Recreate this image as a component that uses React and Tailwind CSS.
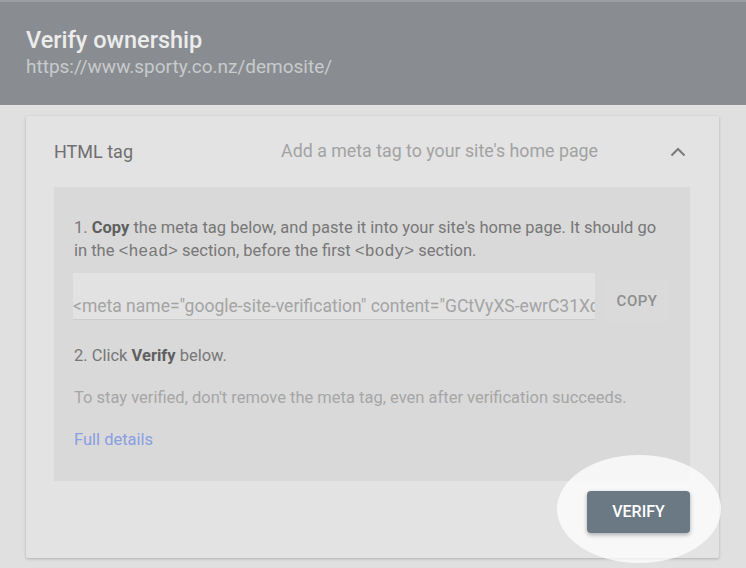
import React from "react";

const font = { fontFamily: "Roboto, 'Noto Sans', Arial, sans-serif" };
const mono = { fontFamily: "'Liberation Mono', 'DejaVu Sans Mono', monospace" };

export default function App() {
  return (
    <div className="min-h-[568px] w-full bg-[#e0e0e0] overflow-hidden" style={font}>
      {/* Dialog header */}
      <div className="h-[105px] bg-[#898d91] border-t-2 border-[#9a9da1] px-[26px] pt-[23px]">
        <h1 className="text-[23.5px] leading-[30px] font-medium text-[#ececec]">Verify ownership</h1>
        <p className="text-[19px] leading-[24px] text-[#c8cacc]">https://www.sporty.co.nz/demosite/</p>
      </div>

      {/* Method card */}
      <div className="ml-[26px] mt-[11px] w-[693px] h-[442px] bg-[#e3e3e3] rounded-[2px] shadow-[0_1px_3px_rgba(0,0,0,0.22)] pl-[28px] pr-[29px]">
        <div className="h-[71px] flex items-center">
          <span className="flex-1 text-[18px] text-[#6f6f6f]">HTML tag</span>
          <span className="text-[17.8px] text-[#a2a2a2]">Add a meta tag to your site's home page</span>
          <span className="ml-[68px] w-[24px] h-[24px] flex items-center justify-center">
            <svg width="16" height="10" viewBox="0 0 16 10" fill="none">
              <polyline points="1.5,8.5 8,2 14.5,8.5" stroke="#7a7a7a" strokeWidth="2" />
            </svg>
          </span>
        </div>

        {/* Instructions panel */}
        <div className="h-[294px] bg-[#d9d9d9] pl-[20px] pr-[20px] pt-[29px]">
          <p className="text-[16.5px] leading-[23px] text-[#777777]">
            1. <b className="font-bold text-[#5f5f5f]">Copy</b> the meta tag below, and paste it into your site's home page. It should go in the{" "}
            <span className="text-[16.5px]" style={mono}>&lt;head&gt;</span> section, before the first{" "}
            <span className="text-[16.5px]" style={mono}>&lt;body&gt;</span> section.
          </p>

          <div className="mt-[10px] flex items-start gap-[9px]">
            <div className="w-[523px] h-[47px] -ml-[1px] bg-[#e2e2e2] border-b border-[#cccccc] flex items-end overflow-hidden">
              <span className="whitespace-nowrap text-[17.5px] leading-[23px] pb-[1px] text-[#a4a4a4]">
                &lt;meta name="google-site-verification" content="GCtVyXS-ewrC31XqT8nq2Lk" /&gt;
              </span>
            </div>
            <button className="mt-[7px] w-[66px] h-[42px] rounded-[3px] bg-[#dadada] text-[15px] font-medium tracking-[0.5px] text-[#8e8e8e]">
              COPY
            </button>
          </div>

          <p className="mt-[22px] text-[16.5px] leading-[23px] text-[#777777]">
            2. Click <b className="font-bold text-[#5f5f5f]">Verify</b> below.
          </p>
          <p className="mt-[19px] text-[16.5px] leading-[23px] text-[#a6a6a6]">
            To stay verified, don't remove the meta tag, even after verification succeeds.
          </p>
          <p className="mt-[19px] text-[16.5px] leading-[23px] text-[#8a9ee2]">Full details</p>
        </div>

        <div className="flex justify-end pt-[10px]">
          <div className="relative">
            <div className="absolute left-[-30px] top-[-36px] w-[164px] h-[108px] rounded-[50%] bg-white/75" />
            <button className="relative w-[103px] h-[42px] rounded-[4px] bg-[#6b7985] text-white text-[16px] font-medium shadow-[0_2px_4px_rgba(0,0,0,0.3)]">
              VERIFY
            </button>
          </div>
        </div>
      </div>
    </div>
  );
}
